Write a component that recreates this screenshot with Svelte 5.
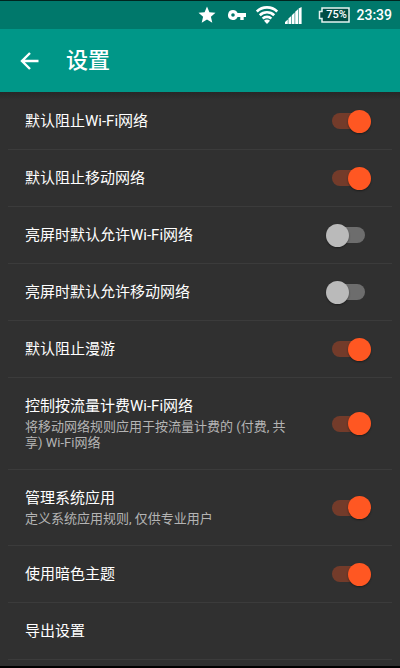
<script>
  let settings = $state([
    { id: 'wifi', title: '默认阻止Wi-Fi网络', on: true },
    { id: 'mobile', title: '默认阻止移动网络', on: true },
    { id: 'screen-wifi', title: '亮屏时默认允许Wi-Fi网络', on: false },
    { id: 'screen-mobile', title: '亮屏时默认允许移动网络', on: false },
    { id: 'roaming', title: '默认阻止漫游', on: true },
    {
      id: 'metered',
      title: '控制按流量计费Wi-Fi网络',
      summary: '将移动网络规则应用于按流量计费的 (付费, 共享) Wi-Fi网络',
      on: true,
    },
    {
      id: 'system',
      title: '管理系统应用',
      summary: '定义系统应用规则, 仅供专业用户',
      on: true,
    },
    { id: 'dark', title: '使用暗色主题', on: true },
  ]);
</script>

<svelte:head>
  <title>设置</title>
</svelte:head>

<div class="status">
  <svg class="star" width="18" height="18" viewBox="0 0 18 18">
    <path d="M9 0.6l2.4 5.7 6.1.5-4.6 4 1.4 6L9 13.6l-5.3 3.2 1.4-6-4.6-4 6.1-.5z" />
  </svg>
  <svg class="key" width="18" height="10" viewBox="0 0 18 10">
    <path
      fill-rule="evenodd"
      d="M5 0a5 5 0 1 0 4.600 7H12.300v3h3.400V7H18V3H9.600A5 5 0 0 0 5 0zM5 3.200a1.800 1.800 0 1 1 0 3.600a1.800 1.800 0 0 1 0-3.600z"
    />
  </svg>
  <svg class="wifi" width="22" height="18" viewBox="0 0 22 18">
    <g fill="none" stroke="#fff" stroke-width="2.700">
      <path d="M0.800 5.600a14.600 14.600 0 0 1 20.400 0" />
      <path d="M3.800 9.200a10.300 10.300 0 0 1 14.400 0" />
      <path d="M6.700 12.600a6.100 6.100 0 0 1 8.600 0" />
    </g>
    <path d="M11 18l-3-3.200a4.200 4.200 0 0 1 6 0z" />
  </svg>
  <svg class="signal" width="17" height="17" viewBox="0 0 17 17">
    <path d="M0 17v-2l2.800-2.600V17zM3.400 17v-5.400l2.800-2.600v8zM6.800 17V8.200l2.800-2.600V17zM10.200 17V4.800l2.800-2.600V17zM13.600 17V1.600L16.600 0v17z" />
  </svg>
  <span class="battery">
    <svg width="32" height="16" viewBox="0 0 32 16">
      <path
        d="M4 1h27v14H4v-3.500H1.500v-7H4z"
        fill="#004d45"
        stroke="#e4f3f1"
        stroke-width="1.500"
      />
    </svg>
    <span class="percent">75%</span>
  </span>
  <time>23:39</time>
</div>

<header>
  <button class="back" aria-label="返回">
    <svg width="20" height="20" viewBox="0 0 20 20">
      <path d="M18.500 10H2.500M10 2L2 10l8 8" fill="none" stroke="#fff" stroke-width="2.400" />
    </svg>
  </button>
  <h1>设置</h1>
</header>

<main>
  {#each settings as item (item.id)}
    <label class="row" for={item.id}>
      <span class="text">
        <span class="title">{item.title}</span>
        {#if item.summary}
          <span class="summary">{item.summary}</span>
        {/if}
      </span>
      <input id={item.id} type="checkbox" role="switch" bind:checked={item.on} />
    </label>
  {/each}
  <button class="row">
    <span class="title">导出设置</span>
  </button>
</main>

<style>
  :global(body) {
    margin: 0;
    background: #000;
    color: #fff;
    font-family: Roboto, "Noto Sans CJK SC", sans-serif;
  }

  .status {
    display: flex;
    align-items: center;
    justify-content: flex-end;
    box-sizing: border-box;
    height: 29px;
    padding-right: 8px;
    border-top: 1px solid #00251f;
    background: #00786b;
  }
  .status svg {
    display: block;
    fill: #fff;
  }
  .star {
    margin-right: 12px;
  }
  .key {
    margin-right: 10px;
  }
  .wifi {
    margin-right: 7px;
  }
  .signal {
    margin-right: 16px;
  }
  .battery {
    position: relative;
    margin-right: 6px;
  }
  .percent {
    position: absolute;
    inset: 0 0 0 4px;
    font-size: 11px;
    font-weight: 500;
    line-height: 16px;
    text-align: center;
  }
  time {
    font-size: 14px;
    font-weight: 500;
    line-height: 20px;
  }

  header {
    display: flex;
    align-items: center;
    height: 63px;
    padding: 0 20px;
    background: #009788;
  }
  button {
    border: 0;
    padding: 0;
    background: none;
    color: inherit;
    font: inherit;
    text-align: left;
    cursor: pointer;
  }
  .back svg {
    display: block;
  }
  h1 {
    margin: 0 0 0 26px;
    font-size: 22px;
    font-weight: 500;
    line-height: 28px;
  }

  main {
    padding: 1px 8px 6px;
    background: linear-gradient(#272727, #303030 8px);
  }
  .row {
    display: flex;
    align-items: center;
    justify-content: space-between;
    box-sizing: border-box;
    width: 100%;
    padding: 18px 21px 18px 17px;
    border-bottom: 1px solid #3b3b3b;
    cursor: pointer;
  }
  .text {
    flex: 1;
    margin-right: 26px;
  }
  .title,
  .summary {
    display: block;
  }
  .title {
    font-size: 15px;
    font-weight: 400;
    line-height: 20px;
    color: #fff;
  }
  .summary {
    margin-top: 3px;
    font-size: 13px;
    line-height: 16px;
    color: #b4b4b4;
  }

  input {
    appearance: none;
    display: flex;
    align-items: center;
    flex: none;
    width: 45px;
    height: 16px;
    margin: 0;
    background: linear-gradient(#6d6d6d, #6d6d6d);
    background-clip: content-box;
    padding: 0 6px;
    box-sizing: border-box;
    border-radius: 14px / 8px;
    cursor: pointer;
  }
  input::before {
    content: "";
    flex: none;
    width: 23px;
    height: 23px;
    margin-left: -6px;
    border-radius: 50%;
    background: #bababa;
    box-shadow: 0 1px 2px rgba(0, 0, 0, 0.4);
  }
  input:checked {
    background: linear-gradient(#733b2a, #733b2a);
    background-clip: content-box;
  }
  input:checked::before {
    margin-left: 16px;
    background: #ff5722;
  }
</style>
